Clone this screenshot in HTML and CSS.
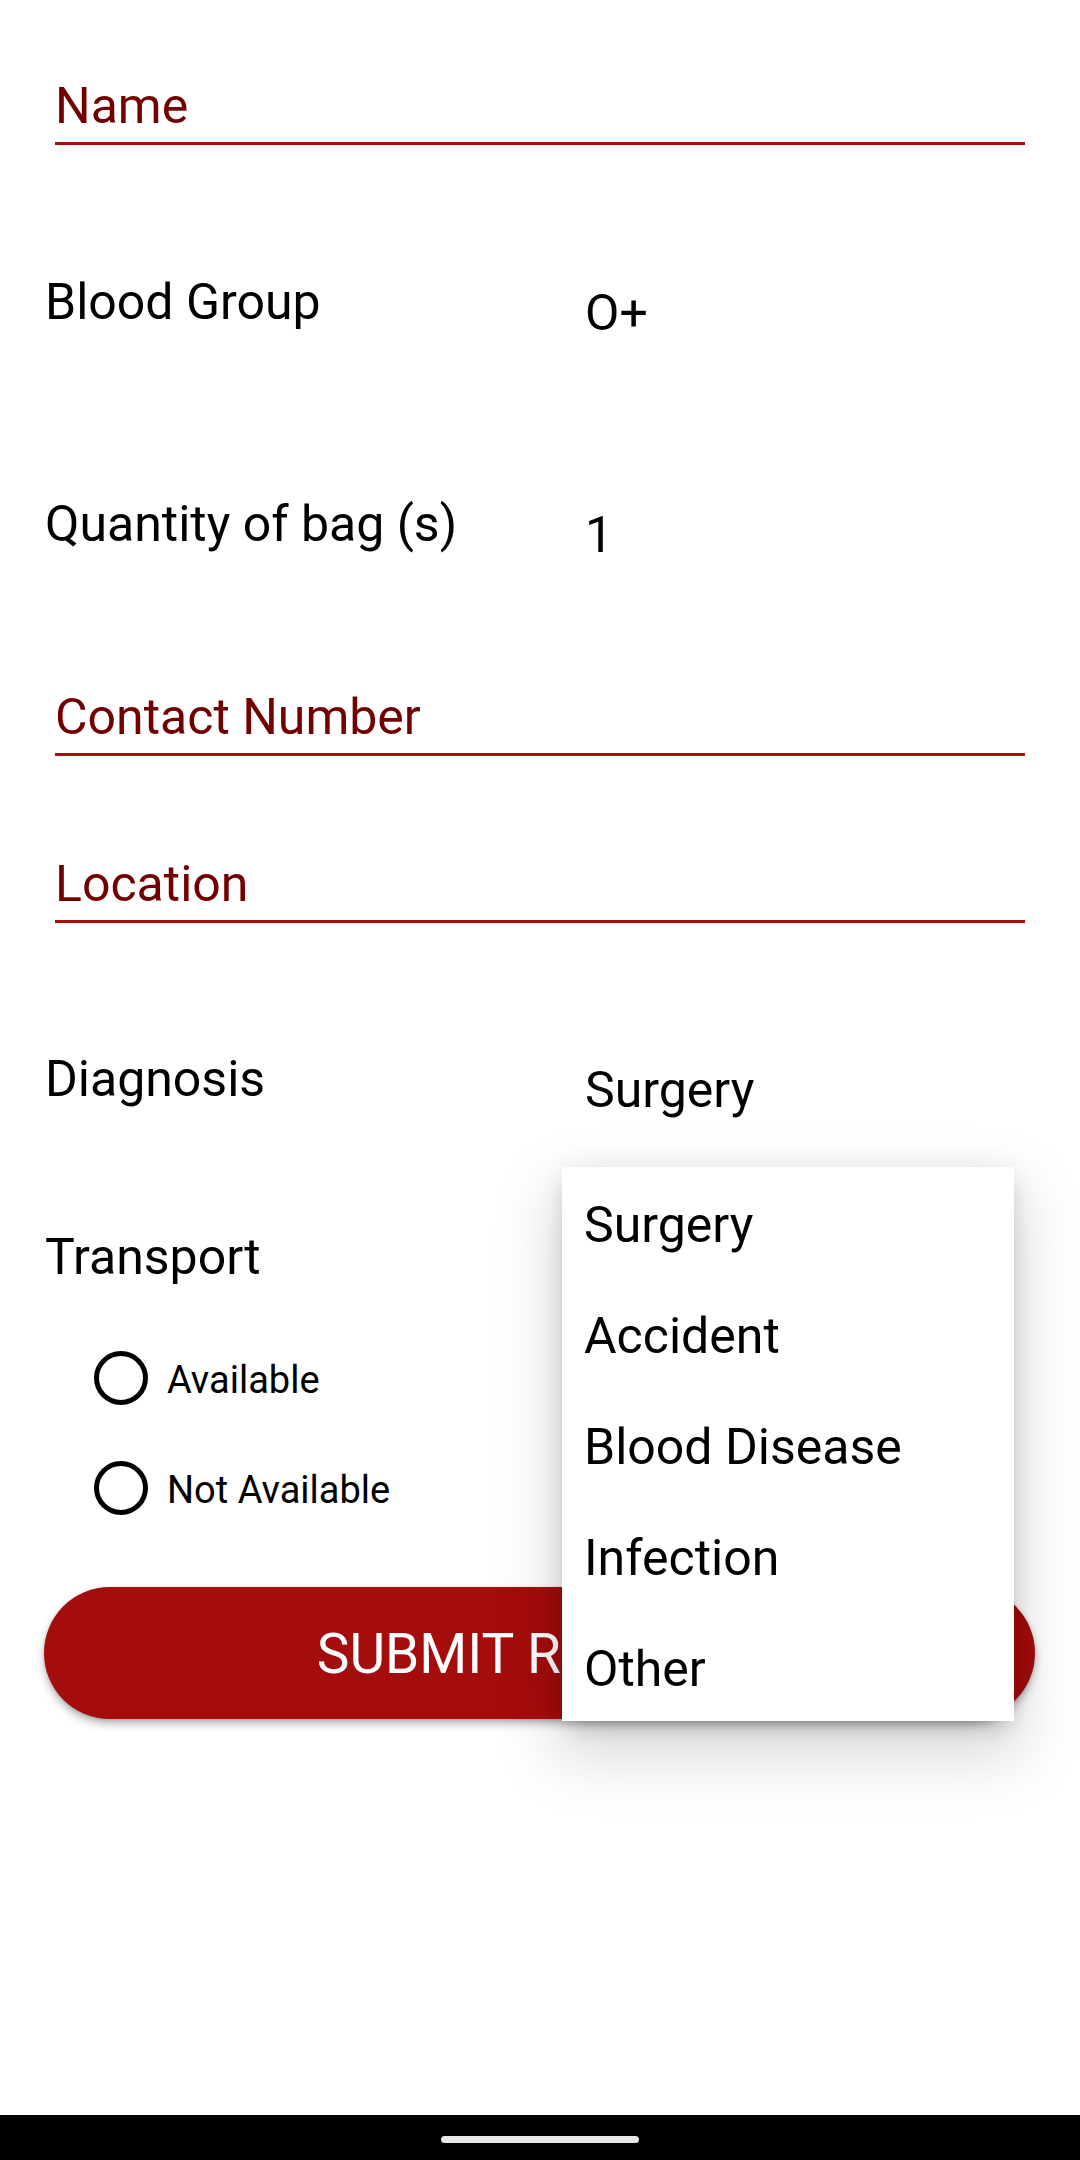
FILE: index.html
```html
<!DOCTYPE html>
<html lang="en">
<head>
<meta charset="utf-8">
<title>Blood Request</title>
<link rel="stylesheet" href="styles.css">
</head>
<body>
<div class="screen">
  <main class="form">
    <div class="field field-name"><span class="hint">Name</span></div>

    <div class="row row-blood">
      <span class="label">Blood Group</span>
      <span class="value">O+</span>
    </div>

    <div class="row row-qty">
      <span class="label">Quantity of bag (s)</span>
      <span class="value">1</span>
    </div>

    <div class="field field-contact"><span class="hint">Contact Number</span></div>
    <div class="field field-location"><span class="hint">Location</span></div>

    <div class="row row-diag">
      <span class="label">Diagnosis</span>
      <span class="value">Surgery</span>
    </div>

    <div class="label transport">Transport</div>

    <div class="radios">
      <div class="radio"><span class="circle"></span><span class="radio-text">Available</span></div>
      <div class="radio"><span class="circle"></span><span class="radio-text">Not Available</span></div>
    </div>

    <button class="submit">SUBMIT REQUEST</button>

    <ul class="menu">
      <li>Surgery</li>
      <li>Accident</li>
      <li>Blood Disease</li>
      <li>Infection</li>
      <li>Other</li>
    </ul>
  </main>
  <nav class="navbar"><span class="pill"></span></nav>
</div>
</body>
</html>
```

FILE: styles.css
```css
* { box-sizing: border-box; }
html, body { margin: 0; padding: 0; background: #fff; }
body {
  font-family: Roboto, "Liberation Sans", sans-serif;
  color: #000;
}
.screen {
  width: 1080px;
  height: 2160px;
  display: flex;
  flex-direction: column;
  overflow: hidden;
}
.form {
  position: relative;
  flex: 1;
  display: flex;
  flex-direction: column;
  align-items: flex-start;
}
.field {
  margin-left: 55px;
  width: 970px;
  padding-bottom: 8px;
  border-bottom: 3px solid #a80f0f;
  font-size: 50px;
  line-height: 56px;
}
.hint { color: #730000; }
.field-name { margin-top: 78px; }
.field-contact { margin-top: 126px; }
.field-location { margin-top: 100px; }

.label { font-size: 50px; line-height: 56px; }
.row {
  display: flex;
  margin-left: 45px;
}
.row .label { width: 540px; }
.row .value { font-size: 50px; line-height: 56px; padding-top: 11px; }
.row-blood { margin-top: 129px; }
.row-qty { margin-top: 155px; }
.row-diag { margin-top: 128px; }

.transport { margin-left: 45px; margin-top: 111px; }

.radios {
  margin-top: 38px;
  margin-left: 94px;
  display: flex;
  flex-direction: column;
}
.radio {
  height: 110px;
  display: flex;
  align-items: center;
  gap: 19px;
}
.circle {
  width: 54px;
  height: 54px;
  border: 5px solid #000;
  border-radius: 50%;
}
.radio-text { font-size: 38px; padding-top: 4px; }

.submit {
  margin-top: 44px;
  margin-left: 44px;
  width: 991px;
  height: 132px;
  border: none;
  border-radius: 66px;
  background: #a50c0c;
  color: #fff;
  font-family: Roboto, "Liberation Sans", sans-serif;
  font-size: 55px;
  padding: 2px 0 0;
  box-shadow: 0 5px 9px rgba(0, 0, 0, 0.28), 0 1px 3px rgba(0, 0, 0, 0.15);
}

.menu {
  position: absolute;
  left: 562px;
  top: 1167px;
  width: 452px;
  margin: 0;
  padding: 0;
  list-style: none;
  background: #fff;
  box-shadow: 0 28px 60px 8px rgba(0, 0, 0, 0.15),
              0 12px 20px -6px rgba(0, 0, 0, 0.16),
              0 0 24px rgba(0, 0, 0, 0.06);
}
.menu li {
  height: 110.8px;
  display: flex;
  align-items: center;
  padding-left: 22px;
  font-size: 50px;
  padding-top: 6px;
}

.navbar {
  height: 45px;
  background: #000;
  display: flex;
  justify-content: center;
  align-items: flex-start;
  padding-top: 21px;
}
.pill {
  width: 198px;
  height: 7px;
  border-radius: 4px;
  background: #e6e6e6;
}
```
